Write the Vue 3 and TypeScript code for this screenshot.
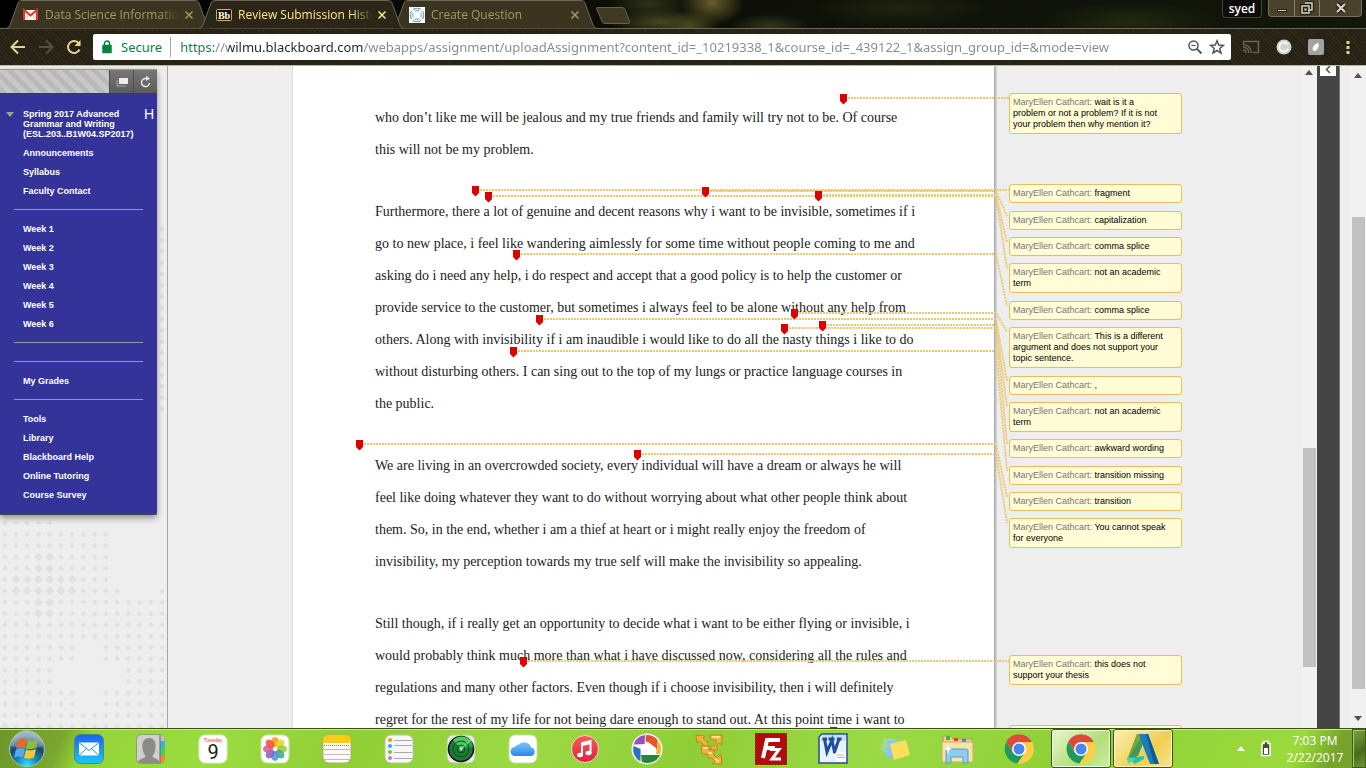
<script setup lang="ts">
interface Tab { title: string; icon: 'gmail' | 'bb' | 'ring'; active: boolean }
interface Note { text: string; gap: number }
interface Pin { x: number; y: number; endX: number; endY: number }
interface DotRow { plus: string; big?: string }

const tabs: Tab[] = [
  { title: 'Data Science Information', icon: 'gmail', active: false },
  { title: 'Review Submission History', icon: 'bb', active: true },
  { title: 'Create Question', icon: 'ring', active: false },
]

const url = 'https://wilmu.blackboard.com/webapps/assignment/uploadAssignment?content_id=_10219338_1&course_id=_439122_1&assign_group_id=&mode=view'

const menu: string[] = [
  'Announcements', 'Syllabus', 'Faculty Contact', '-',
  'Week 1', 'Week 2', 'Week 3', 'Week 4', 'Week 5', 'Week 6', '-', '-',
  'My Grades', '-',
  'Tools', 'Library', 'Blackboard Help', 'Online Tutoring', 'Course Survey',
]

const paragraphs: string[][] = [
  [
    'who don’t like me will be jealous and my true friends and family will try not to be. Of course',
    'this will not be my problem.',
  ],
  [
    'Furthermore, there a lot of genuine and decent reasons why i want to be invisible, sometimes if i',
    'go to new place, i feel like wandering aimlessly for some time without people coming to me and',
    'asking do i need any help, i do respect and accept that a good policy is to help the customer or',
    'provide service to the customer, but sometimes i always feel to be alone without any help from',
    'others. Along with invisibility if i am inaudible i would like to do all the nasty things i like to do',
    'without disturbing others. I can sing out to the top of my lungs or practice language courses in',
    'the public.',
  ],
  [
    'We are living in an overcrowded society, every individual will have a dream or always he will',
    'feel like doing whatever they want to do without worrying about what other people think about',
    'them. So, in the end, whether i am a thief at heart or i might really enjoy the freedom of',
    'invisibility, my perception towards my true self will make the invisibility so appealing.',
  ],
  [
    'Still though, if i really get an opportunity to decide what i want to be either flying or invisible, i',
    'would probably think much more than what i have discussed now, considering all the rules and',
    'regulations and many other factors. Even though if i choose invisibility, then i will definitely',
    'regret for the rest of my life for not being dare enough to stand out. At this point time i want to',
  ],
]

const notes: Note[] = [
  { text: 'wait is it a\nproblem or not a problem? If it is not\nyour problem then why mention it?', gap: 27 },
  { text: 'fragment', gap: 50 },
  { text: 'capitalization', gap: 8 },
  { text: 'comma splice', gap: 7 },
  { text: 'not an academic\nterm', gap: 7 },
  { text: 'comma splice', gap: 8 },
  { text: 'This is a different\nargument and does not support your\ntopic sentence.', gap: 7 },
  { text: ',', gap: 8 },
  { text: 'not an academic\nterm', gap: 7 },
  { text: 'awkward wording', gap: 7 },
  { text: 'transition missing', gap: 8 },
  { text: 'transition', gap: 7 },
  { text: 'You cannot speak\nfor everyone', gap: 7 },
  { text: 'this does not\nsupport your thesis', gap: 107 },
  { text: '', gap: 40 },
]

/* Pin positions and the end of each leader, measured from the sheet's corner. */
const pins: Pin[] = [
  { x: 552, y: 28, endX: 717, endY: 32 },
  { x: 184, y: 120, endX: 717, endY: 124 },
  { x: 414, y: 121, endX: 715, endY: 150 },
  { x: 527, y: 125, endX: 715, endY: 176 },
  { x: 197, y: 126, endX: 715, endY: 203 },
  { x: 225, y: 184, endX: 715, endY: 240 },
  { x: 503, y: 243, endX: 715, endY: 266 },
  { x: 248, y: 249, endX: 715, endY: 315 },
  { x: 531, y: 255, endX: 715, endY: 341 },
  { x: 493, y: 258, endX: 715, endY: 378 },
  { x: 222, y: 281, endX: 715, endY: 405 },
  { x: 68, y: 374, endX: 715, endY: 431 },
  { x: 346, y: 384, endX: 715, endY: 457 },
  { x: 232, y: 591, endX: 717, endY: 595 },
  { x: 542, y: 661, endX: 717, endY: 665 },
]

const leader = (p: Pin): string => `${p.x + 4},${p.y + 4} 704,${p.y + 4} ${p.endX},${p.endY}`
const pinPath = (p: Pin): string => `M${p.x - 4} ${p.y}h7v7l-3.500 3.500l-3.500-3.500z`

/* Background motif: x = nothing, + = small cross, o = large dot. */
const motif: string[] = [
  '+++++', '++++++++++', '++++++++++', '+++oo+++++', '+++oo+++++', '+oooooo+++', '+oooooo++++xxx+',
  '+++oo++++++++++', '+++oo++++++++++', '+++++++++++++++', '+++++++++++++++',
  '+++++++xx++++++', '+++++++xx++++++', '+++++xxxxxx++++', '+++++xxxxxx++++',
  '+++++++xx++++++', '+++++++xx++++++', '+++++++++++++++', 'o++++++++++++++',
]
const STEP = 11.25
const crosses: string[] = []
const blobs: string[] = []
motif.forEach((row, r) => {
  Array.from(row).forEach((c, k) => {
    const x = 4.7 + k * STEP
    const y = 457 + r * STEP * 1.006
    if (c === '+') crosses.push(`M${x - 2.5} ${y}h5M${x} ${y - 2.5}v5`)
    if (c === 'o') blobs.push(`M${x - 4} ${y}l4-4 4 4-4 4z`)
  })
})
for (let i = 0; i < 17; i++) {
  const y = 163 + i * STEP
  crosses.push(`M159.500 ${y}h5M162 ${y - 2.5}v5`)
}

const petals: [number, string][] = [
  [0, '#ff9a1f'], [45, '#e0d822'], [90, '#9ccb3b'], [135, '#3fae86'],
  [180, '#4b97dd'], [225, '#8563c4'], [270, '#d05ca3'], [315, '#f2523c'],
]
</script>

<template>
  <div class="screen">
    <header class="frame">
      <nav class="tabs">
        <div v-for="t in tabs" :key="t.title" class="tab" :class="{ active: t.active }">
          <svg class="tab-shape" viewBox="0 0 205 29" preserveAspectRatio="none" aria-hidden="true">
            <path d="M0 28.500Q3 28 4 25L12 3Q13 .5 16 .5H189Q192 .5 193 3L201 25Q202 28 205 28.500" />
          </svg>
          <button class="tab-name" type="button">
            <svg v-if="t.icon === 'gmail'" width="16" height="16" viewBox="0 0 16 16">
              <path d="M1 3h13v10H1z" fill="#f4f1ee" />
              <path d="M1 13V3l6.500 5.500L14 3v10" fill="none" stroke="#d8392b" stroke-width="2" />
              <path d="M2 12l4-4M13 12L9 8" stroke="#c9c4c0" />
            </svg>
            <svg v-else-if="t.icon === 'bb'" width="16" height="16" viewBox="0 0 16 16">
              <rect x=".5" y="2.500" width="15" height="11" rx="1" fill="#111" stroke="#e8a93c" />
              <text x="8" y="11.500" text-anchor="middle" font-family="Liberation Serif, serif" font-weight="bold" font-size="10" fill="#fff">Bb</text>
            </svg>
            <svg v-else width="16" height="16" viewBox="0 0 16 16">
              <path d="M0 0h16v16H0z" fill="#fff" />
              <circle cx="8" cy="8" r="5.500" fill="none" stroke="#5d8aa3" stroke-width="3.500" />
              <circle cx="8" cy="8" r="5.500" fill="none" stroke="#d3e8f3" stroke-width="2" />
              <path d="M2 2l4 4M14 2l-4 4M2 14l4-4M14 14l-4-4" stroke="#fff" stroke-width="2" />
            </svg>
            <span>{{ t.title }}</span>
          </button>
          <button class="tab-close" type="button" aria-label="Close tab">
            <svg width="10" height="10" viewBox="0 0 10 10"><path d="M1.500 1.500l7 7M8.500 1.500l-7 7" stroke="currentColor" stroke-width="1.500" /></svg>
          </button>
        </div>
        <button class="new-tab" type="button" aria-label="New tab">
          <svg width="36" height="18" viewBox="0 0 36 18"><path d="M1.500 1.500Q1 .5 3 .5h24q2 0 3 2l4.500 12q1 2-1 2H10q-2 0-3-2z" fill="#403923" stroke="#66624f" /></svg>
        </button>
      </nav>
      <div class="window-tools">
        <button class="user" type="button">syed</button>
        <div class="window-buttons">
          <button type="button" aria-label="Minimize"><svg width="12" height="12"><path d="M1.500 7.500h9v2h-9z" fill="#d8d5c8" stroke="#1d1a10" /></svg></button>
          <button type="button" aria-label="Restore"><svg width="14" height="14"><path d="M5 2h7v7H9M2 5h7v7H2zM5 8h1" fill="none" stroke="#1d1a10" stroke-width="3.500" /><path d="M5 2h7v7H9M2 5h7v7H2z" fill="none" stroke="#d8d5c8" stroke-width="1.500" /><path d="M4.500 7.500h2v2h-2z" fill="#d8d5c8" /></svg></button>
          <button class="wide" type="button" aria-label="Close window"><svg width="12" height="12"><path d="M2 2l8 8M10 2l-8 8" stroke="#1d1a10" stroke-width="4.500" /><path d="M2 2l8 8M10 2l-8 8" stroke="#d8d5c8" stroke-width="2.200" /></svg></button>
        </div>
      </div>
    </header>

    <div class="toolbar">
      <div class="nav-buttons">
        <button type="button" aria-label="Back"><svg width="16" height="16" fill="none" stroke="#e3d492" stroke-width="2"><path d="M15 8H2M8 1.500L1.500 8L8 14.500" /></svg></button>
        <button type="button" aria-label="Forward"><svg width="16" height="16" fill="none" stroke="#575034" stroke-width="2"><path d="M1 8h13M8 1.500L14.500 8L8 14.500" /></svg></button>
        <button type="button" aria-label="Reload"><svg width="16" height="16" fill="none" stroke="#e3d492" stroke-width="2"><path d="M13.500 10.500A6 6 0 1 1 12 3.500L14 5.500" /><path d="M14.500 1v6h-6z" fill="#e3d492" stroke="none" /></svg></button>
      </div>
      <label class="omnibox">
        <svg width="10" height="14" viewBox="0 0 10 14"><path d="M1 5.500h8v7H1z" fill="#0b8043" stroke="#0b8043" stroke-width="1.500" stroke-linejoin="round" /><path d="M2.500 6V3.500a2.500 2.500 0 0 1 5 0V6" fill="none" stroke="#0b8043" stroke-width="1.500" /></svg>
        <span class="secure">Secure</span>
        <input class="address" type="text" :value="url" aria-label="Address" spellcheck="false" />
        <button type="button" aria-label="Zoom"><svg width="16" height="16" fill="none" stroke="#555"><circle cx="6.500" cy="6.500" r="4.500" stroke-width="1.500" /><path d="M10 10l4.500 4.500" stroke-width="2" /><path d="M4.500 6.500h4" /></svg></button>
        <button type="button" aria-label="Bookmark"><svg width="16" height="16" fill="none" stroke="#555" stroke-width="1.500"><path d="M8 1.800l1.700 4.300 4.700.3-3.600 3 1.200 4.600L8 11.500 4 14l1.200-4.600-3.600-3 4.700-.3z" /></svg></button>
      </label>
      <div class="extensions">
        <button type="button" aria-label="Cast"><svg width="18" height="16" fill="none" stroke="#66635a" stroke-width="1.500"><path d="M1.500 5V2.500h15v11H11M1 8a6 6 0 0 1 6 6M1 5.500a8.500 8.500 0 0 1 8.500 8.500M1 11a3 3 0 0 1 3 3" /></svg></button>
        <button type="button" aria-label="Extension"><svg width="16" height="16"><circle cx="8" cy="8" r="7.500" fill="#d3d3d3" /><path d="M11.500 5.500A4.500 4.500 0 1 0 12 9.500" fill="none" stroke="#f8f8f8" stroke-width="2" /></svg></button>
        <button type="button" aria-label="Extension"><svg width="16" height="16"><rect width="16" height="16" rx="2" fill="#a2a2a2" /><path d="M10.500 4c1 3-1 8-4.500 8-3-1-1-7 4.500-8z" fill="#fff" /></svg></button>
        <button type="button" aria-label="Menu"><svg width="16" height="16" fill="#e3d492"><path d="M6.500 2h3v3h-3zM6.500 7h3v3h-3zM6.500 12h3v3h-3z" /></svg></button>
      </div>
    </div>

    <main class="body">
      <aside class="side">
        <svg class="dots" aria-hidden="true">
          <path :d="crosses.join('')" stroke="#e1e1e1" stroke-width="2" />
          <path :d="blobs.join('')" fill="#e1e1e1" stroke="#e1e1e1" stroke-linejoin="round" />
        </svg>
        <section class="panel">
          <div class="panel-bar">
            <span class="stripes"></span>
            <button type="button" aria-label="Display menu in window"><svg width="12" height="10"><path d="M1 3v6h9" fill="none" stroke="#aaa" /><path d="M3 1h9v6H3z" fill="#eee" /></svg></button>
            <button type="button" aria-label="Refresh"><svg width="12" height="12"><path d="M9.500 7A4 4 0 1 1 6 2.500" fill="none" stroke="#eee" stroke-width="1.500" /><path d="M6 0l4 2.500L6 5z" fill="#eee" /></svg></button>
          </div>
          <nav class="course">
            <div class="course-head">
              <svg width="8" height="5"><path d="M0 0h8L4 5z" fill="#a3a393" /></svg>
              <h1>Spring 2017 Advanced Grammar and Writing (ESL.203..B1W04.SP2017)</h1>
              <span class="home">H</span>
            </div>
            <ul>
              <li v-for="(m, i) in menu" :key="i">
                <hr v-if="m === '-'" />
                <a v-else href="#">{{ m }}</a>
              </li>
            </ul>
          </nav>
        </section>
      </aside>

      <section class="viewer">
        <div class="document">
          <article class="sheet">
            <p v-for="(p, i) in paragraphs" :key="i">
              <span v-for="line in p" :key="line">{{ line }}</span>
            </p>
          </article>
          <div class="notes">
            <div v-for="(n, i) in notes" :key="i" class="note" :style="{ marginTop: n.gap + 'px' }"><template v-if="n.text"><span>MaryEllen Cathcart: </span>{{ n.text }}</template></div>
          </div>
          <svg class="overlay" aria-hidden="true">
            <polyline v-for="(p, i) in pins" :key="'l' + i" :points="leader(p)" />
            <path v-for="(p, i) in pins" :key="'p' + i" :d="pinPath(p)" />
          </svg>
        </div>
      </section>
      <div class="scroll inner">
        <svg width="8" height="5"><path d="M0 5h8L4 0z" fill="#505050" /></svg>
        <span class="thumb"></span>
      </div>
      <div class="rail">
        <button type="button" aria-label="Expand panel"><svg width="6" height="8"><path d="M5 0L1.500 3.500L5 7" fill="none" stroke="#555" stroke-width="1.500" /></svg></button>
      </div>
      <div class="scroll outer">
        <svg width="8" height="5"><path d="M0 5h8L4 0z" fill="#505050" /></svg>
        <span class="thumb"></span>
        <svg width="8" height="5"><path d="M0 0h8L4 5z" fill="#505050" /></svg>
      </div>
    </main>

    <footer class="taskbar">
      <button class="start" type="button" aria-label="Start">
        <svg width="38" height="38" viewBox="0 0 38 38">
          <defs>
            <radialGradient id="orb" cx=".5" cy=".95" r=".85"><stop offset="0" stop-color="#33e0ff" /><stop offset=".35" stop-color="#1488b8" /><stop offset=".7" stop-color="#1d4668" /><stop offset="1" stop-color="#7d9fb4" /></radialGradient>
          </defs>
          <circle cx="19" cy="19" r="17.500" fill="url(#orb)" stroke="#a8c3c0" />
          <path d="M3 16A16 16 0 0 1 35 16Q19 22 3 16z" fill="#dceaf0" opacity=".3" />
          <path d="M10 10q4-3 9-.5L17 18q-5-2-9 .5z" fill="#e66a2c" />
          <path d="M20 10q5 2 10-.5L28 18q-5 2-10 .5z" fill="#8dbd3d" />
          <path d="M8 19.500q4-2.500 9-.5L15 27.500q-5-2-9 .5z" fill="#5aa8e6" />
          <path d="M18 19.500q5 2 10-.5L26 27.500q-5 2-10 .5z" fill="#f6c833" />
        </svg>
      </button>
      <button type="button" aria-label="Mail"><svg width="32" height="32" viewBox="0 0 32 32">
        <defs><linearGradient id="mail" x2="0" y2="1"><stop stop-color="#1d62f0" /><stop offset="1" stop-color="#19c8fa" /></linearGradient></defs>
        <rect x="1.500" y="1.500" width="29" height="29" rx="6" fill="url(#mail)" stroke="#3d8f86" />
        <path d="M6 9.500h20v13H6z" fill="#fff" /><path d="M6 9.500l10 8 10-8M6 22.500l7.500-7M26 22.500l-7.500-7" fill="none" stroke="#2a8df4" />
      </svg></button>
      <button type="button" aria-label="Contacts"><svg width="32" height="32" viewBox="0 0 32 32">
        <rect x="1.500" y="1.500" width="28" height="29" rx="5" fill="#d2d0cc" stroke="#8e9b74" />
        <path d="M25 2h2q2.500 1 2.500 4v2H25z" fill="#c6c2b8" /><path d="M25 8h5v7h-5z" fill="#38b3ea" /><path d="M25 15h5v8h-5z" fill="#40cf63" /><path d="M25 23h5v3q0 4-5 4z" fill="#f28c28" />
        <path d="M25 2v28" stroke="#666" /><path d="M3 30c0-5 7-4 7.500-7C8 20 7 16 7.500 11c1-8 12-8 13 0 .5 5-.5 9-3 12 .5 3 7 2 7 7z" fill="#8d8b89" />
      </svg></button>
      <button type="button" aria-label="Calendar"><svg width="32" height="32" viewBox="0 0 32 32">
        <rect x="2" y="2" width="28" height="28" rx="6" fill="#fff" stroke="#dcecc8" />
        <text x="16" y="9" text-anchor="middle" font-size="5" font-family="Liberation Sans, sans-serif" fill="#f33">Tuesday</text>
        <text x="16" y="26" text-anchor="middle" font-size="20" font-family="Roboto, sans-serif" fill="#222">9</text>
      </svg></button>
      <button type="button" aria-label="Photos"><svg width="32" height="32" viewBox="0 0 32 32">
        <rect x="2" y="2" width="28" height="28" rx="6" fill="#fcfcf8" stroke="#cfe2b4" />
        <ellipse v-for="[a, c] in petals" :key="a" cx="16" cy="9" rx="3.800" ry="5" :fill="c" fill-opacity=".88" :transform="`rotate(${a} 16 16)`" />
        <circle cx="16" cy="16" r="2" fill="#fff" />
      </svg></button>
      <button type="button" aria-label="Notes"><svg width="32" height="32" viewBox="0 0 32 32">
        <rect x="2" y="2" width="28" height="28" rx="6" fill="#fbfbf7" stroke="#b5a878" />
        <path d="M2 10V8q0-6 6-6h16q6 0 6 6v2z" fill="#fbcb17" /><path d="M3 12.500h26" stroke="#888" stroke-dasharray="1 1" /><path d="M3 16.500h26M3 21.500h26M3 26.500h26" stroke="#bbb" />
      </svg></button>
      <button type="button" aria-label="Reminders"><svg width="32" height="32" viewBox="0 0 32 32">
        <rect x="2" y="2" width="28" height="28" rx="6" fill="#f7f7f7" stroke="#b8c6a4" />
        <path d="M11 7.500h18M11 12.500h18M11 19.500h18M11 25.500h18" stroke="#aaa" />
        <circle cx="7" cy="7" r="2" fill="#ff9500" /><circle cx="7" cy="13" r="2" fill="#22aaff" /><circle cx="7" cy="19" r="2" fill="#5bd33c" /><circle cx="7" cy="25" r="2" fill="#cc73e1" />
      </svg></button>
      <button type="button" aria-label="Radar"><svg width="32" height="32" viewBox="0 0 32 32">
        <rect x="2" y="2" width="28" height="28" rx="6" fill="#e9ebe8" stroke="#b8c6a4" />
        <circle cx="16" cy="16" r="12.500" fill="#1b7a38" stroke="#111" stroke-width="1.500" /><path d="M16 16L26 8A12 12 0 0 0 8 7z" fill="#46cf5e" />
        <path d="M16 16L26 7A12.500 12.500 0 0 1 28 14z" fill="#2fa04a" />
        <g fill="none" stroke="#0d4a20"><circle cx="16" cy="16" r="4" /><circle cx="16" cy="16" r="8" /></g><path d="M16 16L26 7" stroke="#8df59a" /><circle cx="16" cy="16" r="1.500" fill="#bff5c5" />
      </svg></button>
      <button type="button" aria-label="iCloud"><svg width="32" height="32" viewBox="0 0 32 32">
        <defs><linearGradient id="cloud" x2="0" y2="1"><stop stop-color="#7fc8fa" /><stop offset="1" stop-color="#2a86ee" /></linearGradient></defs>
        <rect x="2" y="2" width="28" height="28" rx="6" fill="#fff" stroke="#c8e0a8" />
        <path d="M8 23a4.500 4.500 0 0 1 0-9A4 4 0 0 1 12 11.500a7 7 0 0 1 12 3A4.300 4.300 0 0 1 24 23z" fill="url(#cloud)" />
      </svg></button>
      <button type="button" aria-label="Music"><svg width="32" height="32" viewBox="0 0 32 32">
        <defs><linearGradient id="music" x2="0" y2="1"><stop stop-color="#ff5a56" /><stop offset="1" stop-color="#d9233e" /></linearGradient></defs>
        <circle cx="16" cy="16" r="13.500" fill="url(#music)" stroke="#eed9d3" /><path d="M13 22V10l8.500-2v12M13 12l8.500-2" fill="none" stroke="#fff" stroke-width="2" /><ellipse cx="11" cy="22" rx="3" ry="2.200" fill="#fff" /><ellipse cx="19.500" cy="20" rx="3" ry="2.200" fill="#fff" />
      </svg></button>
      <button type="button" aria-label="Picasa"><svg width="32" height="32" viewBox="0 0 32 32">
        <circle cx="16" cy="16" r="15.500" fill="#f4f4f4" />
        <path d="M14 2.100A14 14 0 0 0 2.700 11.500L13.500 11z" fill="#9a4fc0" /><path d="M15 2l11 4.200v10L14.500 8z" fill="#e2552f" /><path d="M15 2a14 14 0 0 1 11.500 4.800V10z" fill="#e2552f" />
        <path d="M27 7.500a14 14 0 0 1 2 13.500h-4z" fill="#f3b32d" /><path d="M10 22h19A14 14 0 0 1 11 29z" fill="#22893a" /><path d="M2.500 13l7 3V28.500A14 14 0 0 1 2.500 13z" fill="#2f6fc2" />
        <path d="M10.500 22v-8L17 9l8 6v7z" fill="#fff" />
      </svg></button>
      <button type="button" aria-label="VMware"><svg width="32" height="32" viewBox="0 0 32 32">
        <g fill="#f2b13a" stroke="#c07a14" stroke-width=".8"><path d="M3 2l9 1-2 2 4 4 1-1v5h-5V11L6 8 4 10z" /><path d="M16 2h13v10l-3-2-2 2v5h-6v-4h3l2-2V7h-5z" /><path d="M8 13h8v4h5v5l3 3 4-4 1 10H19l3-3-3-3h-4v-4H9z" /></g><path d="M10 15h5M19 4h8M15 20h4M22 26l4 3" stroke="#ffe08a" stroke-width="1.800" />
      </svg></button>
      <button type="button" aria-label="FileZilla"><svg width="32" height="32" viewBox="0 0 32 32">
        <path d="M.5 .5h31v31H.5z" fill="#b30c0c" stroke="#8a0404" stroke-dasharray="2 1" /><path d="M8 25l4-18h13M10 15h10" fill="none" stroke="#fff" stroke-width="4" /><path d="M15 16.500h9L17 26h9" fill="none" stroke="#fff" stroke-width="3" />
      </svg></button>
      <button type="button" aria-label="Word"><svg width="32" height="32" viewBox="0 0 32 32">
        <path d="M5 1h25v29H2V4z" fill="#e9f1fa" stroke="#234f94" stroke-width="1.500" /><path d="M4 5l4-3h21v6H4z" fill="#c9dcf2" />
        <path d="M5.500 6h4.500M11.500 6h6M20 6h4.500M7.500 6l2.500 13 5-12 2.500 12L22 6" fill="none" stroke="#1c4f9e" stroke-width="3" /><path d="M15 21l14-3v11h-8z" fill="#fff" /><path d="M19 22h8M20 24.500h8" stroke="#9fb8da" />
      </svg></button>
      <button type="button" aria-label="Sticky notes"><svg width="32" height="32" viewBox="0 0 32 32">
        <path d="M5 4l13 3-4 16L1 17z" fill="#9fdb9c" opacity=".85" /><path d="M9 7l14 1-1 17-16-1z" fill="#8fc4ef" /><path d="M11 11l16-4 4 15-16 5z" fill="#fbe05c" />
      </svg></button>
      <button type="button" aria-label="File explorer"><svg width="34" height="32" viewBox="0 0 34 32">
        <path d="M3 3h8l2 3h19v22H3z" fill="#ecd591" stroke="#b99a4b" /><path d="M6 3h4v4H6zM14 5h4v3h-4z" fill="#3ab54a" /><path d="M14 5h4v3h-4z" fill="#d9442f" /><path d="M22 6h4v3h-4z" fill="#3a8cd9" /><path d="M2 9h31v20H2z" fill="#f6e5a9" stroke="#c9ad60" />
        <path d="M6 30V18q0-2 2-2h18q2 0 2 2v12h-5v-6H11v6z" fill="#8ecdf0" stroke="#4f9fc9" /><path d="M8 11l1 4 3 1-3 1-1 5-1-5-3-1 3-1z" fill="#fff" />
      </svg></button>
      <button v-for="k in 2" :key="k" :class="{ running: k === 2 }" type="button" aria-label="Chrome"><svg width="32" height="32" viewBox="0 0 32 32">
        <circle cx="16" cy="16" r="14.500" fill="#ffce43" /><path d="M16 16L3.440 8.750A14.500 14.500 0 0 1 28.560 8.750z" fill="#dc4a3c" /><path d="M16 9h12.700A14.500 14.500 0 0 0 3.440 8.750L10 19z" fill="#dc4a3c" />
        <path d="M3.440 8.750A14.500 14.500 0 0 0 14.500 30.400L21.500 20 10 19.500z" fill="#1e9b5c" /><path d="M28.800 9H16l6 11-7.500 10.500A14.500 14.500 0 0 0 28.800 9z" fill="#ffce43" /><circle cx="16" cy="16" r="7" fill="#fff" /><circle cx="16" cy="16" r="5.500" fill="#4a86ee" />
      </svg></button>
      <button class="running gold" type="button" aria-label="Autodesk"><svg width="34" height="32" viewBox="0 0 34 32">
        <path d="M11 1h10L12 23 1 27z" fill="#3f9a5c" /><path d="M11 1h6L2 26z" fill="#7ca83b" /><path d="M13 1h9l11 30h-9l-7-18z" fill="#1680b8" /><path d="M20 1h2l11 30h-5z" fill="#12599a" /><path d="M1 25l17-2v3l-9 5z" fill="#27c2ae" /><path d="M1 24l9 2-8 5z" fill="#4bd6c0" />
      </svg></button>
      <div class="tray">
        <button class="tray-icon" type="button" aria-label="Show hidden icons"><svg width="8" height="5"><path d="M0 5h8L4 0z" fill="#fff" /></svg></button>
        <button class="tray-icon" type="button" aria-label="Battery"><svg width="12" height="17"><path d="M4 1.500h4v2h2v12H2v-12h2z" fill="#444d2c" stroke="#fff" stroke-width="1.500" /><path d="M4 8h4v6H4z" fill="#fff" /></svg></button>
        <button class="clock" type="button"><span>7:03 PM</span><span>2/22/2017</span></button>
        <button class="desktop" type="button" aria-label="Show desktop"></button>
      </div>
    </footer>
  </div>
</template>

<style>
body { margin: 0; overflow: hidden; }
</style>

<style scoped>
.screen { display: flex; flex-direction: column; height: 100vh; overflow: hidden; background: #eee; font-family: "Liberation Sans", Arial, sans-serif; }
.screen * { box-sizing: border-box; }
button { display: flex; align-items: center; justify-content: center; margin: 0; padding: 0; border: 0; background: none; font: inherit; color: inherit; }
svg { display: block; flex: none; }

.frame { display: flex; justify-content: space-between; height: 28px; flex: none; font: 12px "Open Sans", sans-serif;
  background:
    radial-gradient(ellipse 50px 14px at 660px 22px, #46481f, transparent),
    radial-gradient(ellipse 32px 22px at 712px 3px, #665e2c, transparent),
    radial-gradient(ellipse 30px 14px at 690px 26px, #454a22, transparent),
    radial-gradient(ellipse 40px 14px at 650px 4px, #30331a, transparent),
    radial-gradient(ellipse 40px 12px at 770px 26px, #33361a, transparent),
    radial-gradient(ellipse 90px 20px at 900px 8px, #20230f, transparent),
    radial-gradient(ellipse 90px 20px at 1130px 22px, #23280f, transparent),
    linear-gradient(90deg, #000, #0d0f07 45%, #13160b); }
.tabs { display: flex; padding-left: 6px; }
.tab { position: relative; display: flex; align-items: center; width: 205px; height: 29px; padding: 0 17px; color: #a99a5c; }
.tab + .tab { margin-left: -12px; }
.tab.active { z-index: 2; color: #ffe88c; }
.tab-shape { position: absolute; inset: 0; width: 100%; height: 100%; }
.tab-shape path { fill: #3a3421; stroke: #6b6856; }
.active .tab-shape path { fill: #2b2618; }
.tab-name { position: relative; flex: 1; min-width: 0; justify-content: flex-start; gap: 6px; }
.tab-name span { flex: 1; overflow: hidden; text-align: left; white-space: nowrap; mask-image: linear-gradient(90deg, #000 115px, transparent 135px); }
.tab-close { position: relative; }
.new-tab { align-self: flex-start; margin: 7px 0 0 -2px; }
.window-tools { display: flex; gap: 6px; padding-right: 4px; }
.user { width: 40px; height: 18px; border: 1px solid #45463a; border-top: 0; border-radius: 0 0 4px 4px; background: #0b0c07; color: #fff; font-size: 12px; font-weight: 600; }
.window-buttons { display: flex; height: 17px; border: 1px solid #77705a; border-top: 0; border-radius: 0 0 4px 4px; background: #4a422a; }
.window-buttons button { width: 25px; }
.window-buttons button + button { border-left: 1px solid #8a8268; }
.window-buttons .wide { width: 42px; }

.toolbar { display: flex; align-items: center; flex: none; height: 38px; padding: 0 10px; gap: 11px; border-top: 1px solid #6b6856; border-bottom: 1px solid #b9b5a9;
  background: repeating-linear-gradient(45deg, #2e2919 0 1px, #262114 1px 3px); }
.nav-buttons { display: flex; gap: 12px; }
.omnibox { display: flex; flex: 1; align-items: center; height: 26px; padding: 0 6px 0 9px; border-radius: 2px; background: #fff; font: 13px "Noto Sans", sans-serif; }
.secure { margin: 0 9px; color: #0b8043; }
.address { flex: 1; min-width: 0; height: 20px; padding: 0 0 0 9px; border: 0; outline: 0; font: 13px "Noto Sans", sans-serif; color: transparent;
  background: linear-gradient(90deg, #0b8043 43px, #888 43px 57px, #222 57px 192px, #888 192px); background-clip: text; -webkit-background-clip: text; box-shadow: -1px 0 #aaa; }
.omnibox button { margin-left: 6px; }
.extensions { display: flex; gap: 16px; }

.body { display: flex; flex: 1; min-height: 0; overflow: hidden; }
.side { position: relative; flex: none; width: 168px; border-right: 1px solid #a6a6a6; }
.dots { position: absolute; inset: 0; width: 100%; height: 100%; }
.panel { position: relative; width: 157px; margin-top: 3px; border-bottom: 1px solid #444; border-radius: 0 0 2px 0; box-shadow: 0 3px 6px #0006; background: #333399; }
.panel-bar { display: flex; height: 24px; border-top: 1px solid #999; background: linear-gradient(#777, #5c5c5c); }
.stripes { flex: 1; background: repeating-linear-gradient(45deg, #b9b9b9 0 5px, #c8c8c8 5px 10px); }
.panel-bar button { width: 24px; border-left: 1px solid #4c4c4c; }
.course { padding: 16px 0 10px; color: #fff; font-size: 9px; line-height: 10px; font-weight: bold; }
.course-head { display: flex; align-items: flex-start; padding: 0 3px 0 6px; }
.course-head svg { margin-top: 3px; }
.course h1 { flex: 1; margin: 0 0 0 9px; font-size: inherit; }
.home { font-size: 14px; font-weight: normal; }
.course ul { margin: 4px 14px 0; padding: 0; list-style: none; }
.course li { height: 19px; display: flex; align-items: center; }
.course a { margin-left: 9px; color: inherit; text-decoration: none; white-space: nowrap; }
.course hr { flex: 1; height: 1px; margin: 0; border: 0; background: #999; }

.viewer { display: flex; flex: 1; justify-content: center; min-width: 0; padding-left: 5px; overflow: hidden; background: #eee; }
.document { position: relative; display: flex; align-items: stretch; gap: 15px; flex: none; }
.sheet { width: 702px; padding: 36px 0 0 82px; border-left: 1px solid #ddd; background: #fff; box-shadow: 2px 0 2px #aaa; font: 14px/32px "Liberation Serif", "Times New Roman", serif; color: #222; }
.sheet p { margin: 0 0 30px; }
.sheet span { display: block; white-space: nowrap; }
.notes { width: 173px; }
.note { min-height: 19px; padding: 3px; border: 1px solid #e6bf5b; border-radius: 3px; background: #fffcd6; font-size: 9px; line-height: 11px; color: #000; white-space: pre; }
.note span { color: #777; }
.overlay { position: absolute; inset: 0; width: 100%; height: 100%; }
.overlay polyline { fill: none; stroke: #ecc870; stroke-width: 2; stroke-dasharray: 2 1; }
.overlay path { fill: #d00; }

.scroll { display: flex; flex-direction: column; align-items: center; flex: none; background: #f1f1f1; }
.thumb { width: 13px; background: #c1c1c1; }
.inner { width: 16px; padding-top: 4px; }
.inner .thumb { margin-top: 373px; height: 219px; }
.rail { flex: none; width: 23px; background: #444; border-right: 1px solid #777; }
.rail button { width: 16px; height: 10px; margin-left: 3px; padding-bottom: 2px; background: #fff; }
.outer { width: 16px; margin-left: 10px; padding: 7px 0; }
.outer .thumb { flex: 1; margin: 139px 0 27px; }

.taskbar { display: flex; align-items: stretch; flex: none; height: 40px; border-top: 1px solid #39500f; box-shadow: inset 0 1px #c8ec8b;
  background: linear-gradient(115deg, #6d9628 0, #7aa72f 60px, #94d438 85px, #9bdc3f 200px, #90ce36 320px, #9bda43 480px, #8fce37 640px, #9bda44 800px, #8fd036 980px, #9ada3c 1185px, #76a42c 1220px, #6f9a2c 1330px); }
.taskbar > button { width: 62px; }
.taskbar > .start { width: 54px; margin-right: 4px; }
.taskbar > .running { width: 60px; margin: 0 1px; border: 1px solid #37521a; border-radius: 3px; box-shadow: inset 0 0 0 1px #f2fbe2; background: linear-gradient(135deg, #e8f6cf, #b0df78 60%, #cdeea0); }
.taskbar > .gold { background: linear-gradient(135deg, #fbf0b4, #f0cf4e 60%, #f8e48c); box-shadow: inset 0 0 0 1px #fdf4c8; }
.tray { display: flex; align-items: center; margin-left: auto; color: #fff; font: 12px/17px "Open Sans", sans-serif; }
.tray-icon { width: 25px; }
.clock { flex-direction: column; width: 74px; }
.desktop { align-self: stretch; width: 14px; border: 1px solid #3f5d18; box-shadow: inset 1px 1px #a8c874; background: linear-gradient(150deg, #7da53c, #496b1a 60%, #6d9534); }
</style>
